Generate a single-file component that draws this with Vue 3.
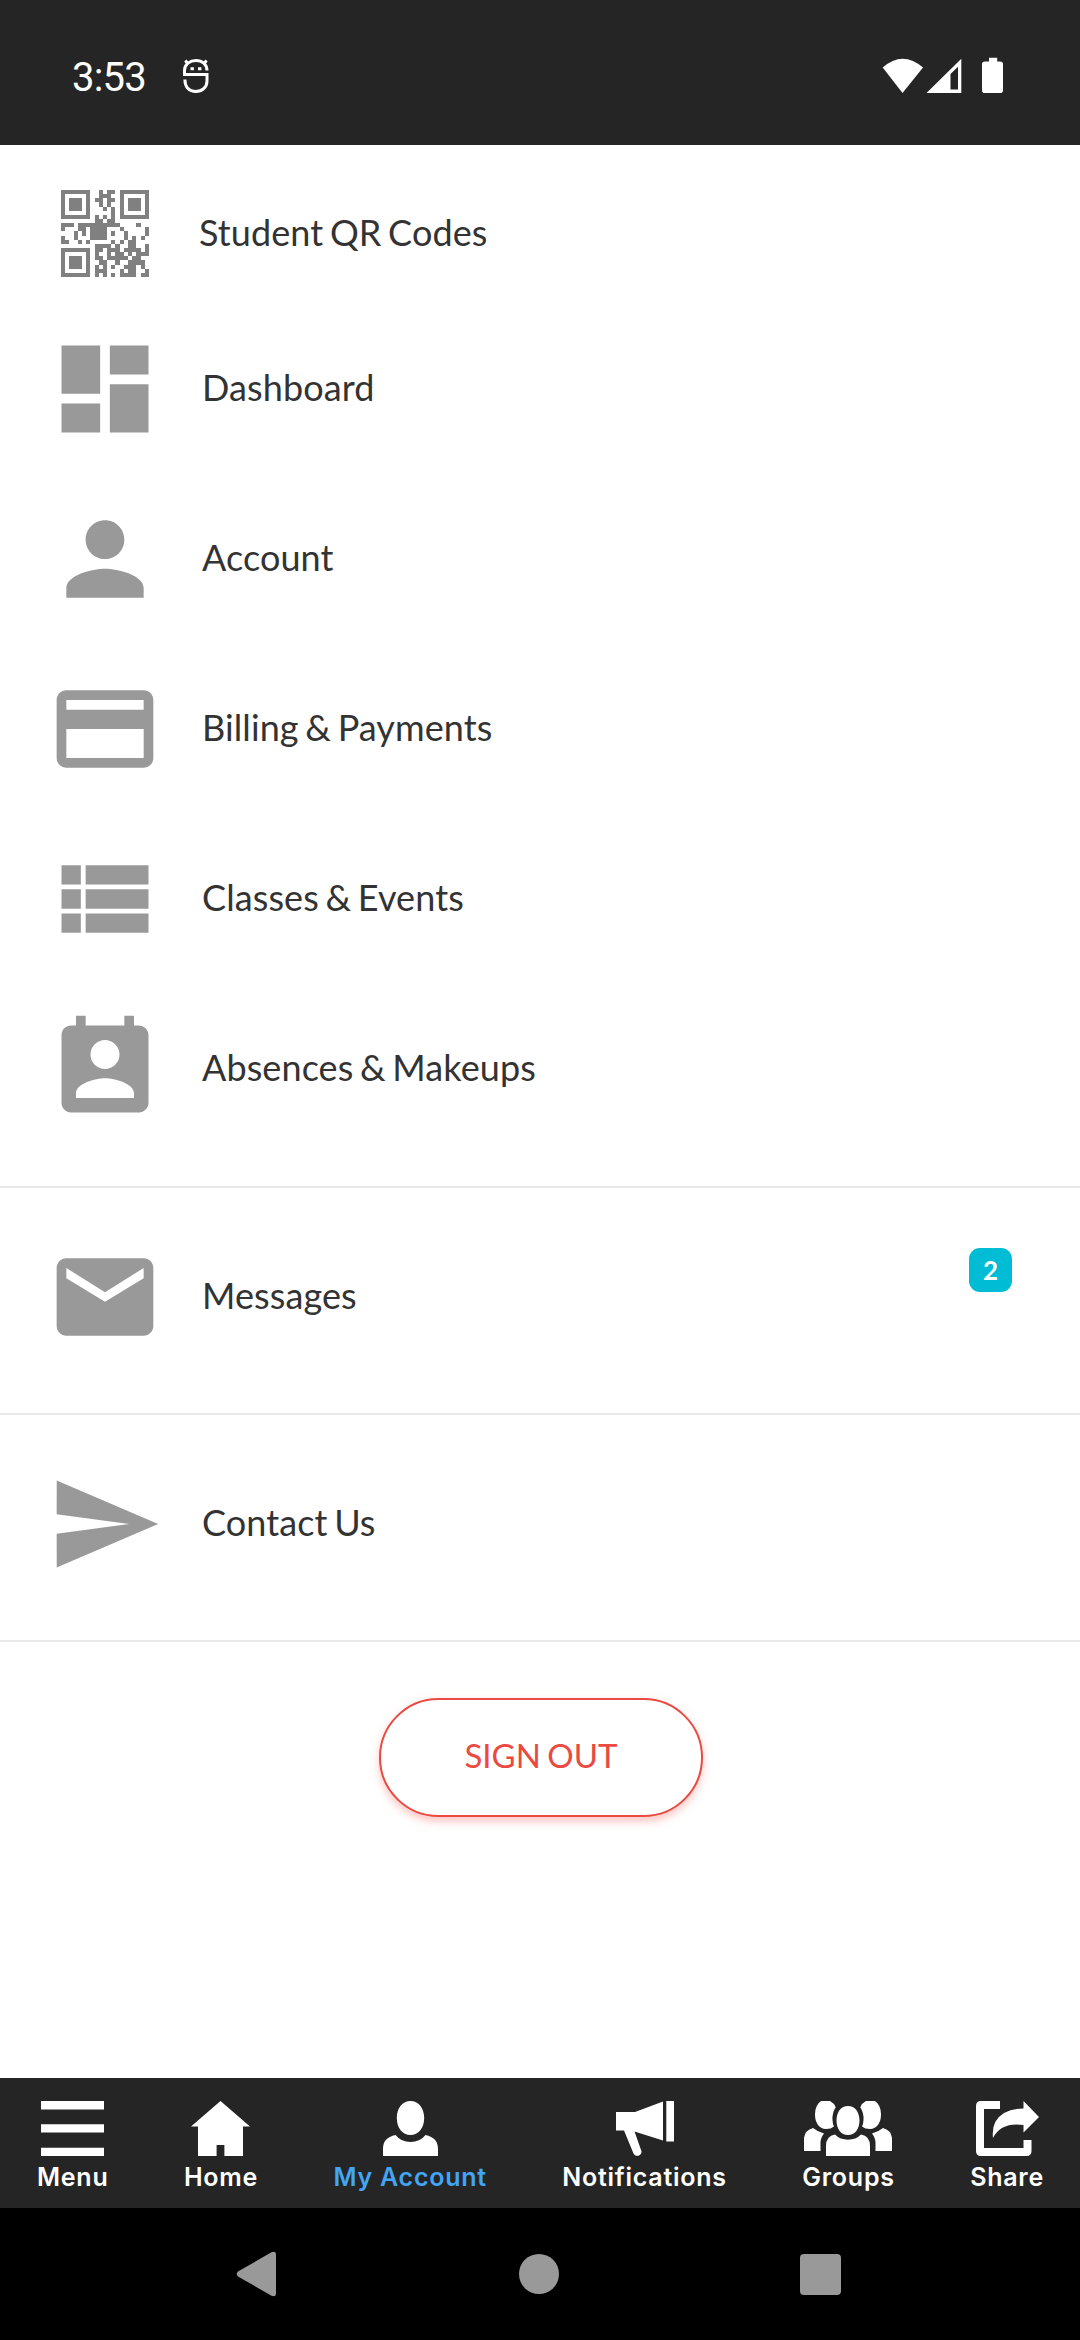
<script setup>
// One string per row of the QR code icon, 21 x 21 modules
const qrRows = [
  '#######..#.##.#######',
  '#.....#..###..#.....#',
  '#.###.#.##.##.#.###.#',
  '#.###.#..#.#..#.###.#',
  '#.###.#...#.#.#.###.#',
  '#.....#.....#.#.....#',
  '#######.#.#.#.#######',
  '........##.##........',
  '###.##########....#..',
  '#...##.####...#.....#',
  '...#.#.####.#..#....#',
  '#..#...####....#.#.#.',
  '##..#.#.....#.#.##...',
  '........####.#..##..#',
  '#######.##.###.####.#',
  '#.....#.#..#.##.#.###',
  '#.###.#.##.#####.##..',
  '#.###.#..##..#..####.',
  '#.###.#.#.#.#..###.#.',
  '#.....#.###...#.##..#',
  '#######.#.#.#.####.##',
]
const qrPath = qrRows
  .map((row, y) => [...row].map((c, x) => (c === '#' ? `M${x} ${y}h1v1h-1z` : '')).join(''))
  .join('')

const mainItems = [
  { label: 'Dashboard', path: 'M3 13h8V3H3v10zm0 8h8v-6H3v6zm10 0h8V11h-8v10zm0-18v6h8V3h-8z' },
  { label: 'Account', path: 'M12 12c2.21 0 4-1.79 4-4s-1.79-4-4-4-4 1.79-4 4 1.79 4 4 4zm0 2c-2.67 0-8 1.34-8 4v2h16v-2c0-2.66-5.33-4-8-4z' },
  { label: 'Billing & Payments', path: 'M20 4H4c-1.11 0-2 .89-2 2v12c0 1.11.89 2 2 2h16c1.11 0 2-.89 2-2V6c0-1.11-.89-2-2-2zm0 14H4v-6h16v6zm0-10H4V6h16v2z' },
  { label: 'Classes & Events', path: 'M3 14h4v-4H3v4zm0 5h4v-4H3v4zM3 9h4V5H3v4zm5 5h13v-4H8v4zm0 5h13v-4H8v4zM8 5v4h13V5H8z' },
  { label: 'Absences & Makeups', path: 'M19 3h-1V1h-2v2H8V1H6v2H5c-1.11 0-2 .9-2 2v14c0 1.1.89 2 2 2h14c1.1 0 2-.9 2-2V5c0-1.1-.9-2-2-2zm-7 3c1.66 0 3 1.34 3 3s-1.34 3-3 3-3-1.34-3-3 1.34-3 3-3zm6 12H6v-1c0-2 4-3.1 6-3.1s6 1.1 6 3.1v1z' },
]
const extraItems = [
  { label: 'Messages', badge: 2, path: 'M20 4H4c-1.1 0-2 .9-2 2v12c0 1.1.9 2 2 2h16c1.1 0 2-.9 2-2V6c0-1.1-.9-2-2-2zm0 4.1l-8 4.9-8-4.9V6l8 5 8-5v2.1z' },
  { label: 'Contact Us', path: 'M2.01 21L23 12 2.01 3 2 10l15 2-15 2z' },
]

const tabs = [
  { label: 'Menu', w: 63, path: 'M0 0h63v8.4H0zM0 23.2h63v8.4H0zM0 46.8h63V55H0z' },
  { label: 'Home', w: 59, path: 'M29.5 0L59 25.6H52V55H33.4V44H25.6V55H7V25.6H0z' },
  { label: 'My Account', w: 55, active: true, path: 'M27.5 0C35.5 0 41.2 7 41.2 17S35.5 34 27.5 34 13.8 27 13.8 17 19.5 0 27.5 0zM0 55V48C0 40 4 36 12.5 34Q18 41 27.5 41T42.5 34C51 36 55 40 55 48V55z' },
  { label: 'Notifications', w: 58, path: 'M0 11H19L47 .5V39.5L18.5 30.5 25.4 50C26.5 54.5 19.5 57 17.5 52.5L8 29.5H0zM50.3 0H58V40.5H50.3z' },
  { label: 'Groups', w: 88, path: 'M44 5C51 5 55.5 11 55.5 19.5S51 34 44 34 32.5 28 32.5 19.5 37 5 44 5zM22 55V45Q22 35 31 33.5Q36 38.7 44 38.7T57 33.5Q66 35 66 45V55zM17 0H26Q30 2 31.7 6.2Q28 12 28.5 19Q28.7 23 30 25.5Q27 28 22 28C15 28 11 21.5 11 13.5Q11 4 17 0zM71 0H62Q58 2 56.3 6.2Q60 12 59.5 19Q59.3 23 58 25.5Q61 28 66 28C73 28 77 21.5 77 13.5Q77 4 71 0zM0 50V37Q1 29 9 27Q14 31 20 32.5Q16.5 37 16.5 42V50zM88 50V37Q87 29 79 27Q74 31 68 32.5Q71.500 37 71.500 42V50z' },
  { label: 'Share', w: 63, path: 'M5 0H24V8H8V47H47.500V39H55.500V50Q55.500 55 50.500 55H5Q0 55 0 50V5Q0 0 5 0zM47.500 0L63 16 47.500 31.500V24Q25 21 17 37Q15 20 28 12Q36 7.500 47.500 7.500z' },
]
</script>

<template>
  <div class="screen">
    <header class="status">
      <span class="clock">3:53</span>
      <svg class="logo" width="26" height="36" viewBox="0 0 26 36" fill="none" stroke="#fff" stroke-width="3">
        <path d="M24 12.500C24 6 19 2.500 13 2.500S1.500 6 1.500 12.500V16.500H24V23C24 29.500 19 33.500 12.700 33.500S1.900 29.500 1.900 21.500M4.800 5.500L2.300 2.600M21 5.500L23.600 2.600" />
        <path d="M7.500 10.700h3.400M15 10.700h3.400" />
      </svg>
      <svg class="signals" width="122" height="38" viewBox="0 0 122 38" fill="#fff">
        <path d="M.7 10.600Q20.700-7 41 10.600L20.500 36z" />
        <path fill-rule="evenodd" d="M44.500 36L79.300 1.700V36zM68.500 32.500H76V9.800L68.500 17z" />
        <path d="M107 .7h8.200v3.800h3a2.800 2.800 0 0 1 2.800 2.800v26a2.800 2.800 0 0 1-2.800 2.800h-15.400a2.800 2.800 0 0 1-2.800-2.800v-26a2.800 2.800 0 0 1 2.800-2.800h4.200z" />
      </svg>
    </header>

    <main class="content">
      <section class="group first">
        <div class="row qr">
          <svg class="qr-icon" width="88" height="87" viewBox="0 0 21 21" preserveAspectRatio="none" shape-rendering="crispEdges">
            <path :d="qrPath" />
          </svg>
          <span>Student QR Codes</span>
        </div>
        <div v-for="item in mainItems" :key="item.label" class="row">
          <svg class="icon" viewBox="0 0 24 24"><path :d="item.path" /></svg>
          <span>{{ item.label }}</span>
        </div>
      </section>
      <section v-for="item in extraItems" :key="item.label" class="group single">
        <div class="row">
          <svg class="icon" viewBox="0 0 24 24"><path :d="item.path" /></svg>
          <span>{{ item.label }}</span>
          <b v-if="item.badge" class="badge">{{ item.badge }}</b>
        </div>
      </section>
      <button class="sign-out">SIGN OUT</button>
    </main>

    <nav class="tabs">
      <a v-for="tab in tabs" :key="tab.label" class="tab" :class="{ active: tab.active }">
        <svg :width="tab.w" height="55" :viewBox="`0 0 ${tab.w} 55`" fill="#fff"><path :d="tab.path" /></svg>
        <span>{{ tab.label }}</span>
      </a>
    </nav>

    <footer class="system">
      <svg width="42" height="46" viewBox="0 0 42 46"><path d="M2 20.500L35.500 1.200Q40 -.5 40 4V42Q40 46.500 35.500 44.800L2 25.500Q-.5 23 2 20.500z" /></svg>
      <svg width="40" height="40" viewBox="0 0 40 40"><circle cx="20" cy="20" r="20" /></svg>
      <svg width="41" height="41" viewBox="0 0 41 41"><rect width="41" height="41" rx="4" /></svg>
    </footer>
  </div>
</template>

<style>
body {
  margin: 0;
}
</style>

<style scoped>
.screen {
  display: flex;
  flex-direction: column;
  width: 1080px;
  height: 2340px;
  overflow: hidden;
  background: #fff;
  font-family: Lato, sans-serif;
}
.status {
  display: flex;
  align-items: center;
  box-sizing: border-box;
  height: 145px;
  padding: 7px 76px 0 72px;
  background: #252525;
}
.clock {
  width: 111px;
  color: #fff;
  font: 40px/48px Roboto, sans-serif;
  letter-spacing: -0.8px;
  padding-top: 4px;
}
.signals {
  margin-left: auto;
}
.content {
  display: flex;
  flex: 1;
  flex-direction: column;
}
.group {
  box-sizing: border-box;
  border-bottom: 2px solid #e9e9e9;
}
.first {
  height: 1043px;
}
.single {
  height: 227px;
  padding-top: 24px;
}
.row {
  display: flex;
  align-items: center;
  height: 170px;
  padding-left: 46.5px;
  color: #333;
  font-size: 36px;
  line-height: 44px;
  letter-spacing: 0.1px;
  word-spacing: -2.7px;
}
.row span {
  padding-bottom: 4px;
}
.qr {
  height: 141px;
  padding: 18px 0 0 61px;
}
.qr-icon {
  margin-right: 50px;
  fill: #808080;
}
.icon {
  width: 116px;
  height: 116px;
  margin-right: 39.5px;
  fill: #999;
}
.row .badge {
  align-self: flex-start;
  width: 43px;
  height: 44px;
  margin: 36px 68px 0 auto;
  border-radius: 11px;
  background: #00bcd4;
  color: #fff;
  font-size: 26px;
  line-height: 44px;
  text-align: center;
}
.sign-out {
  align-self: center;
  width: 324px;
  height: 119px;
  margin: 56px 0 0 2px;
  padding: 0 0 5px;
  border: 2px solid #ea4a41;
  border-radius: 60px;
  background: #fff;
  box-shadow: 0 5px 6px rgb(244 67 54 / 0.2), 0 3px 14px rgb(244 67 54 / 0.1);
  color: #ea4a41;
  font-family: Lato, sans-serif;
  font-size: 33px;
  word-spacing: -2px;
}
.tabs {
  display: flex;
  justify-content: space-between;
  box-sizing: border-box;
  height: 130px;
  padding: 23px 36px 0 37px;
  background: #252525;
}
.tab {
  display: flex;
  flex-direction: column;
  align-items: center;
  color: #fff;
  font: 600 25px/30px Inter, sans-serif;
  letter-spacing: 0.75px;
}
.tab span {
  margin-top: 6px;
}
.active {
  color: #42a5f5;
}
.system {
  display: flex;
  align-items: center;
  justify-content: space-between;
  box-sizing: border-box;
  height: 132px;
  padding: 0 239px 0 236px;
  background: #000;
  fill: #999;
}
</style>
